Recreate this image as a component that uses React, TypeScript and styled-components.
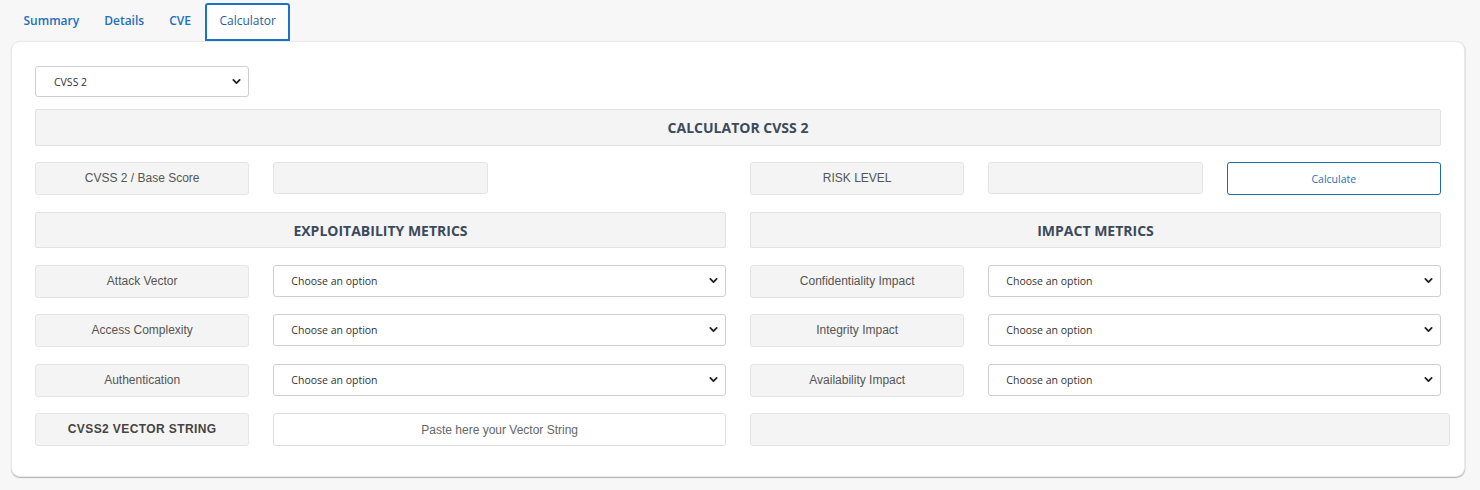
import React from "react";
import styled, { createGlobalStyle } from "styled-components";

const Global = createGlobalStyle`
  html, body { margin: 0; padding: 0; background: #f7f7f7; }
  body { font-family: "Open Sans", Arial, sans-serif; }
  * { box-sizing: border-box; }
`;

const Page = styled.div`
  width: 1480px;
  height: 490px;
  padding: 3px 15px 0 11px;
  background: #f7f7f7;
`;

const Tabs = styled.nav`
  display: flex;
  align-items: stretch;
  height: 38px;
`;

const Tab = styled.div<{ $active?: boolean }>`
  display: flex;
  align-items: center;
  padding: 0 ${(p) => (p.$active ? "12px" : "10.5px")} 3px;
  font-family: "Open Sans", sans-serif;
  font-size: 12px;
  font-weight: ${(p) => (p.$active ? 500 : 600)};
  color: ${(p) => (p.$active ? "#1f5f9f" : "#1d6fc0")};
  border: 2px solid ${(p) => (p.$active ? "#1a73c8" : "transparent")};
  border-radius: 3px 3px 0 0;
  background: ${(p) => (p.$active ? "#fff" : "transparent")};
  margin-left: ${(p) => (p.$active ? "2px" : "0")};
`;

const Card = styled.section`
  background: #fff;
  border: 1px solid #e9e9e9;
  border-radius: 9px;
  box-shadow: 0 1px 1px rgba(0, 0, 0, 0.28), 1px 0 1px rgba(0, 0, 0, 0.06);
  height: 436px;
  padding: 24px 23px 0 23px;
  display: flex;
  flex-direction: column;
`;

const Row = styled.div<{ $gap: number }>`
  display: grid;
  grid-template-columns: repeat(6, 1fr);
  column-gap: 24px;
  margin-bottom: ${(p) => p.$gap}px;
`;

const Box = styled.div<{ $h?: number; $span?: number; $bold?: boolean; $extend?: number }>`
  grid-column: span ${(p) => p.$span ?? 1};
  height: ${(p) => p.$h ?? 33}px;
  background: #f4f4f4;
  border: 1px solid #e4e4e4;
  border-radius: 3px;
  display: flex;
  align-items: center;
  justify-content: center;
  padding-bottom: 1px;
  font-family: "Liberation Sans", Arial, sans-serif;
  font-size: 12px;
  font-weight: ${(p) => (p.$bold ? 700 : 400)};
  color: ${(p) => (p.$bold ? "#444" : "#555")};
  margin-right: ${(p) => -(p.$extend ?? 0)}px;
  letter-spacing: ${(p) => (p.$bold ? "0.4px" : "0")};
`;

const Heading = styled.div<{ $span: number; $h: number }>`
  grid-column: span ${(p) => p.$span};
  height: ${(p) => p.$h}px;
  background: #f4f4f4;
  border: 1px solid #e2e2e2;
  border-radius: 2px;
  display: flex;
  align-items: center;
  justify-content: center;
  font-family: "Open Sans", sans-serif;
  font-size: 14px;
  font-weight: 700;
  color: #3b4a5c;
`;

const SelectWrap = styled.div<{ $span: number }>`
  grid-column: span ${(p) => p.$span};
  position: relative;
  height: 32px;
`;

const Select = styled.select`
  appearance: none;
  -webkit-appearance: none;
  width: 100%;
  height: 100%;
  background: #fff;
  border: 1px solid #cfcfcf;
  border-radius: 3px;
  padding: 0 30px 0 17px;
  font-family: "Open Sans", sans-serif;
  font-size: 10.5px;
  color: #333;
  outline: none;
`;

const Chevron = styled.svg`
  position: absolute;
  right: 8px;
  top: 50%;
  width: 9px;
  height: 9px;
  margin-top: -5px;
  pointer-events: none;
`;

const VersionWrap = styled.div`
  position: relative;
  width: 214px;
  height: 31px;
  margin-bottom: 12px;
`;

const VectorInput = styled.input`
  grid-column: span 2;
  height: 33px;
  border: 1px solid #dedede;
  border-radius: 3px;
  background: #fff;
  text-align: center;
  font-family: "Liberation Sans", Arial, sans-serif;
  font-size: 12px;
  outline: none;
  &::placeholder { color: #666; }
`;

const Button = styled.button`
  height: 33px;
  background: #fff;
  border: 1px solid #1f6aaa;
  border-radius: 3px;
  color: #2a6fb8;
  font-family: "Open Sans", sans-serif;
  font-size: 10.5px;
  cursor: pointer;
`;

const Spacer = styled.div``;

const ChevronIcon = () => (
  <Chevron viewBox="0 0 10 10">
    <path d="M1.5 3.2l3.5 3.5 3.5-3.5" fill="none" stroke="#222" strokeWidth="2" strokeLinecap="round" strokeLinejoin="round" />
  </Chevron>
);

const OptionSelect = ({ span }: { span: number }) => (
  <SelectWrap $span={span}>
    <Select defaultValue="">
      <option value="">Choose an option</option>
    </Select>
    <ChevronIcon />
  </SelectWrap>
);

const metrics: [string, string][] = [
  ["Attack Vector", "Confidentiality Impact"],
  ["Access Complexity", "Integrity Impact"],
  ["Authentication", "Availability Impact"],
];

export default function App() {
  return (
    <Page>
      <Global />
      <Tabs>
        <Tab>Summary</Tab>
        <Tab>Details</Tab>
        <Tab>CVE</Tab>
        <Tab $active>Calculator</Tab>
      </Tabs>
      <Card>
        <VersionWrap>
          <Select defaultValue="2" style={{ paddingLeft: 18 }}>
            <option value="2">CVSS 2</option>
            <option value="3">CVSS 3</option>
          </Select>
          <ChevronIcon />
        </VersionWrap>
        <Row $gap={16}>
          <Heading $span={6} $h={37}>CALCULATOR CVSS 2</Heading>
        </Row>
        <Row $gap={17}>
          <Box>CVSS 2 / Base Score</Box>
          <Box $h={32} />
          <Spacer />
          <Box>RISK LEVEL</Box>
          <Box $h={32} />
          <Button>Calculate</Button>
        </Row>
        <Row $gap={17}>
          <Heading $span={3} $h={36}>EXPLOITABILITY METRICS</Heading>
          <Heading $span={3} $h={36}>IMPACT METRICS</Heading>
        </Row>
        {metrics.map(([l, r]) => (
          <Row $gap={16.4} key={l}>
            <Box>{l}</Box>
            <OptionSelect span={2} />
            <Box>{r}</Box>
            <OptionSelect span={2} />
          </Row>
        ))}
        <Row $gap={0}>
          <Box $bold>CVSS2 VECTOR STRING</Box>
          <VectorInput placeholder="Paste here your Vector String" />
          <Box $span={3} $extend={9} />
        </Row>
      </Card>
    </Page>
  );
}
